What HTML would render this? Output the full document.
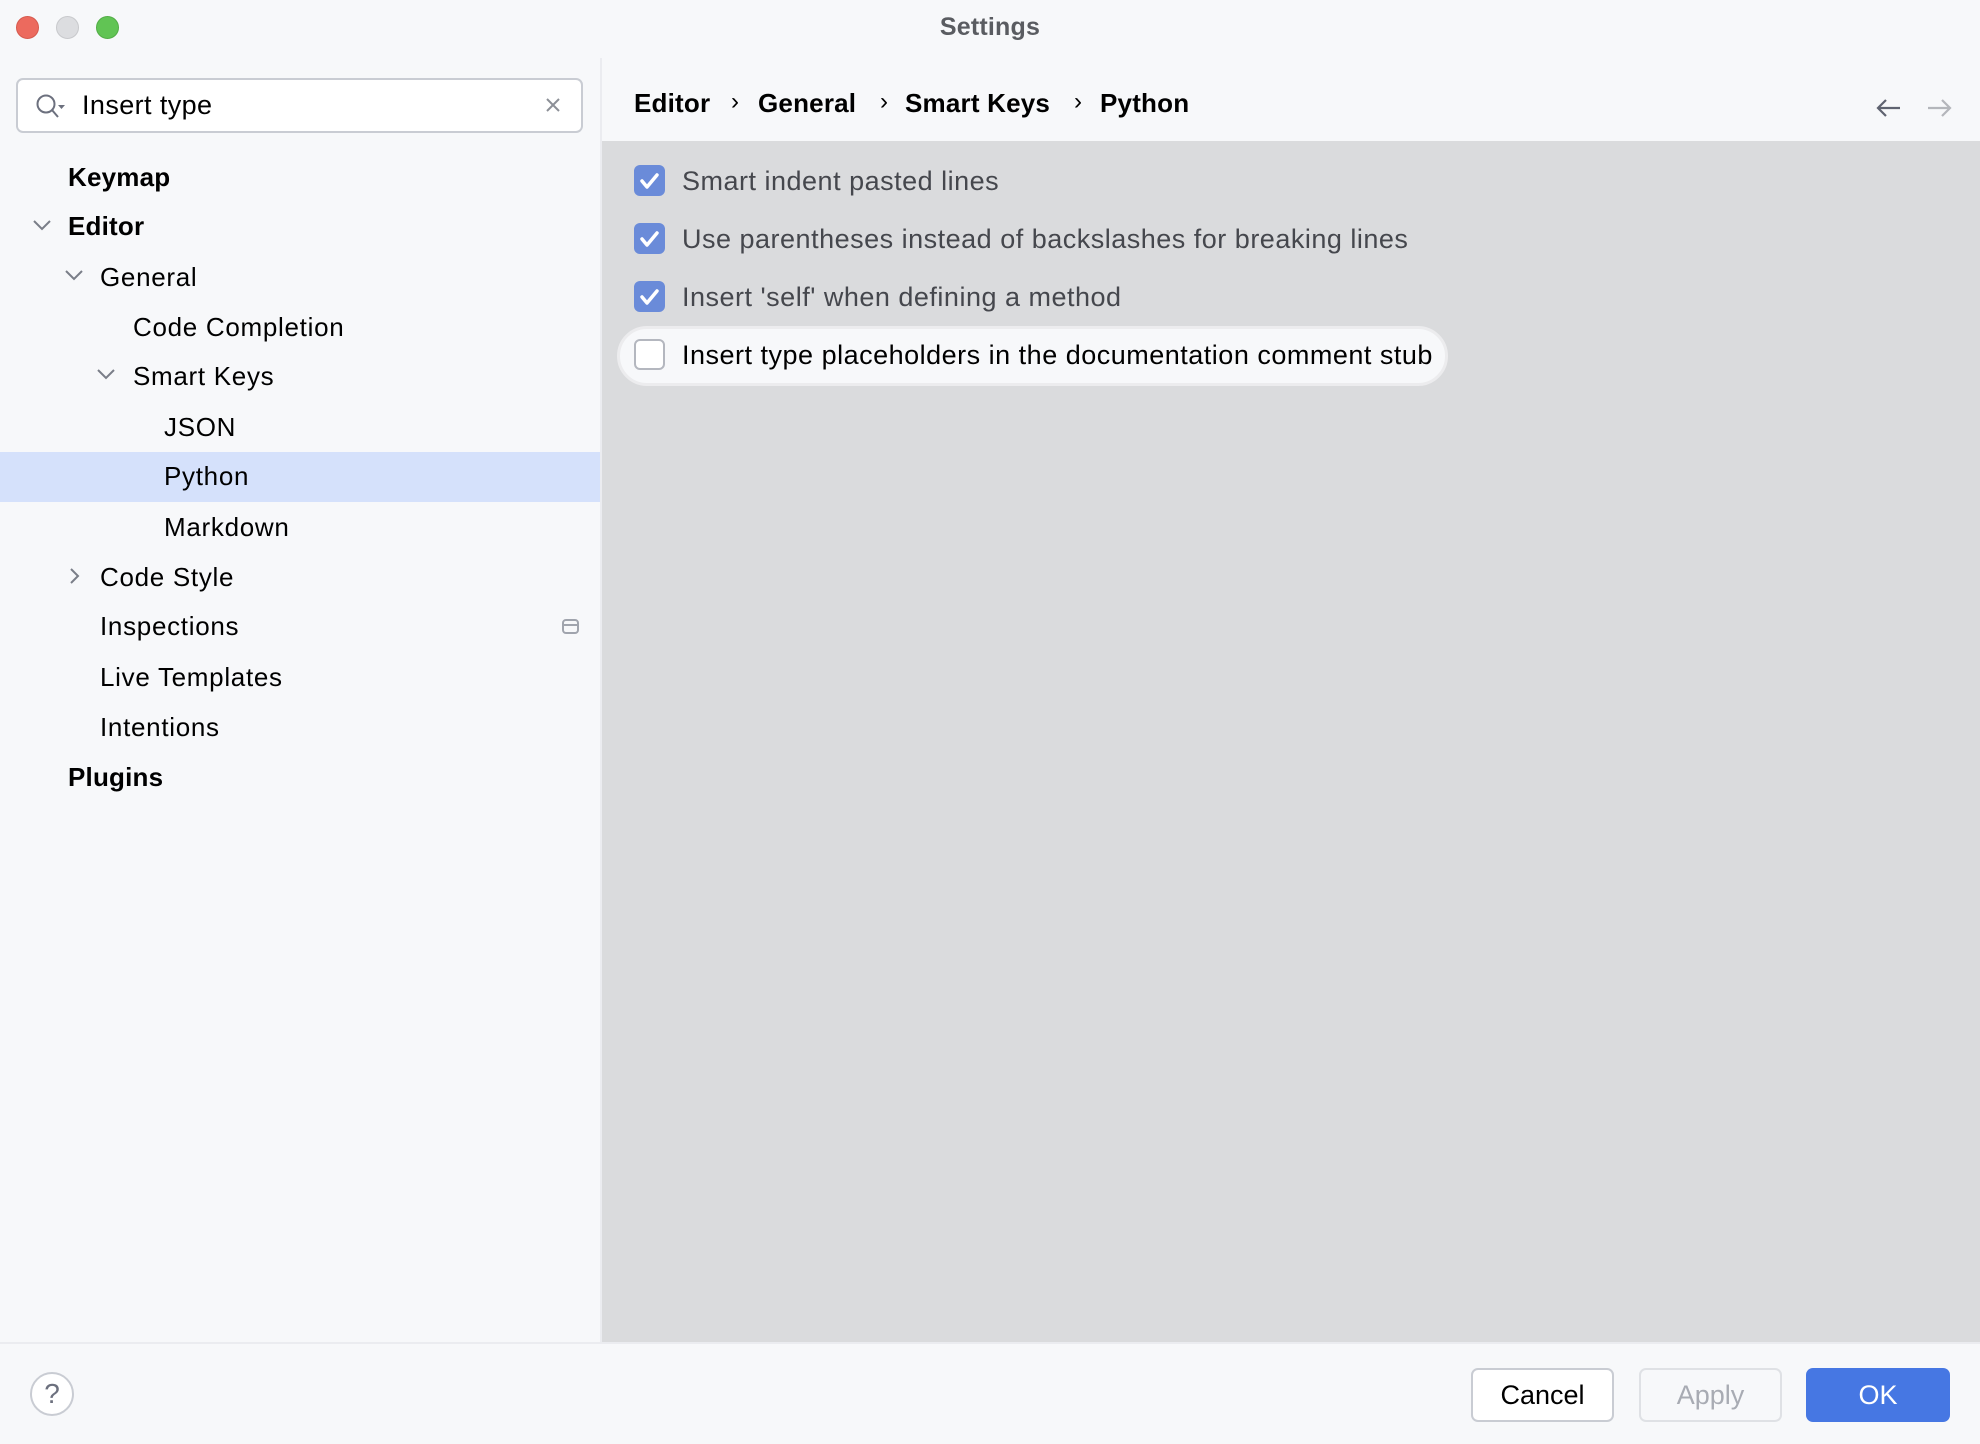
<!DOCTYPE html>
<html><head><meta charset="utf-8"><style>
*{margin:0;padding:0;box-sizing:border-box}
body{width:1980px;height:1444px;background:#f7f8fa;font-family:"Liberation Sans",sans-serif;position:relative;overflow:hidden;color:#000}
.a{position:absolute;white-space:nowrap}
.t{height:50px;line-height:50px;font-size:26px;letter-spacing:0.7px}
.b{font-weight:bold;letter-spacing:0.2px}
.dot{position:absolute;width:23px;height:23px;border-radius:50%;top:16px}
.cb{position:absolute;left:634px;width:31px;height:31px;border-radius:6px;background:#6a8bd9}
.ct{position:absolute;left:682px;font-size:27px;color:#45474d;height:40px;line-height:40px;white-space:nowrap;letter-spacing:0.5px}
.btn{position:absolute;top:1368px;height:54px;border-radius:7px;font-size:27px;line-height:50px;text-align:center}
</style></head><body>
<div class="dot" style="left:16px;background:#ec6a5e;border:1px solid #d65a4e"></div>
<div class="dot" style="left:56px;background:#dcdde0;border:1px solid #c8c9cc"></div>
<div class="dot" style="left:96px;background:#61c454;border:1px solid #52ad46"></div>
<div class="a b" style="left:0;width:1980px;text-align:center;top:10px;font-size:25px;color:#5a5c61;line-height:34px">Settings</div>

<div class="a" style="left:16px;top:78px;width:567px;height:55px;border:2px solid #c9ccd3;border-radius:7px;background:#fff"></div>
<svg class="a" style="left:34px;top:92px" width="36" height="30" viewBox="0 0 36 30"><circle cx="12" cy="12" r="8.5" fill="none" stroke="#6c707e" stroke-width="2"/><line x1="18" y1="18" x2="24" y2="25" stroke="#6c707e" stroke-width="2"/><path d="M24 13h7l-3.5 4z" fill="#6c707e"/></svg>
<div class="a" style="left:82px;top:84px;font-size:27px;line-height:42px;letter-spacing:0.4px">Insert type</div>
<svg class="a" style="left:545px;top:97px" width="16" height="16"><path d="M2 2L14 14M14 2L2 14" stroke="#8c8f97" stroke-width="2"/></svg>

<div class="a" style="left:0;top:452px;width:601px;height:50px;background:#d5e1fb"></div>
<div class="a t b" style="left:68px;top:152px">Keymap</div>
<div class="a t b" style="left:68px;top:201px">Editor</div>
<div class="a t" style="left:100px;top:252px">General</div>
<div class="a t" style="left:133px;top:302px">Code Completion</div>
<div class="a t" style="left:133px;top:351px">Smart Keys</div>
<div class="a t" style="left:164px;top:402px">JSON</div>
<div class="a t" style="left:164px;top:451px">Python</div>
<div class="a t" style="left:164px;top:502px">Markdown</div>
<div class="a t" style="left:100px;top:552px">Code Style</div>
<div class="a t" style="left:100px;top:601px">Inspections</div>
<div class="a t" style="left:100px;top:652px">Live Templates</div>
<div class="a t" style="left:100px;top:702px">Intentions</div>
<div class="a t b" style="left:68px;top:752px">Plugins</div>
<svg class="a" style="left:0;top:0" width="601" height="800">
<g fill="none" stroke="#7a7e88" stroke-width="2">
<path d="M34 221l8 8 8-8"/><path d="M66 271l8 8 8-8"/><path d="M98 370l8 8 8-8"/>
<path d="M71 569l7 7-7 7"/>
<rect x="563" y="620" width="15" height="13" rx="3" stroke="#a0a4ad"/><line x1="563" y1="625" x2="578" y2="625" stroke="#a0a4ad"/>
</g></svg>

<div class="a" style="left:600px;top:58px;width:2px;height:1284px;background:#ebecf0"></div>
<div class="a" style="left:602px;top:141px;width:1378px;height:1201px;background:#dadbdd"></div>
<div class="a b" style="left:634px;top:86px;font-size:26px;line-height:34px">Editor</div>
<div class="a" style="left:731px;top:86px;font-size:24px;line-height:32px">›</div>
<div class="a b" style="left:758px;top:86px;font-size:26px;line-height:34px">General</div>
<div class="a" style="left:880px;top:86px;font-size:24px;line-height:32px">›</div>
<div class="a b" style="left:905px;top:86px;font-size:26px;line-height:34px">Smart Keys</div>
<div class="a" style="left:1074px;top:86px;font-size:24px;line-height:32px">›</div>
<div class="a b" style="left:1100px;top:86px;font-size:26px;line-height:34px">Python</div>
<svg class="a" style="left:1874px;top:96px" width="80" height="24"><g fill="none" stroke-width="2.2"><path d="M4 12h22M12 4l-8 8 8 8" stroke="#5f6370"/><path d="M54 12h22M68 4l8 8-8 8" stroke="#b4b6bb"/></g></svg>

<div class="a" style="left:617px;top:326px;width:831px;height:60px;border-radius:30px;background:#f7f8fa;border:3px solid #ececee"></div>
<div class="cb" style="top:165px"></div><div class="ct" style="top:161px">Smart indent pasted lines</div>
<div class="cb" style="top:223px"></div><div class="ct" style="top:219px">Use parentheses instead of backslashes for breaking lines</div>
<div class="cb" style="top:281px"></div><div class="ct" style="top:277px">Insert 'self' when defining a method</div>
<div class="cb" style="top:339px;background:#fff;border:2px solid #b4b7bf"></div><div class="ct" style="top:335px;color:#000">Insert type placeholders in the documentation comment stub</div>
<svg class="a" style="left:634px;top:165px" width="31" height="200"><g fill="none" stroke="#fff" stroke-width="3.5" stroke-linecap="round" stroke-linejoin="round"><path d="M8 16l5 6 10-12"/><path d="M8 74l5 6 10-12"/><path d="M8 132l5 6 10-12"/></g></svg>

<div class="a" style="left:0;top:1342px;width:1980px;height:2px;background:#ebecf0"></div>
<div class="a" style="left:30px;top:1372px;width:44px;height:44px;border-radius:50%;border:2px solid #c9ccd3;background:#fff;text-align:center;font-size:28px;line-height:40px;color:#6c707e">?</div>
<div class="btn" style="left:1471px;width:143px;background:#fff;border:2px solid #c9ccd3">Cancel</div>
<div class="btn" style="left:1639px;width:143px;border:2px solid #dfe1e5;color:#a8abb3">Apply</div>
<div class="btn" style="left:1806px;width:144px;background:#4677e3;color:#fff;line-height:54px">OK</div>
</body></html>
